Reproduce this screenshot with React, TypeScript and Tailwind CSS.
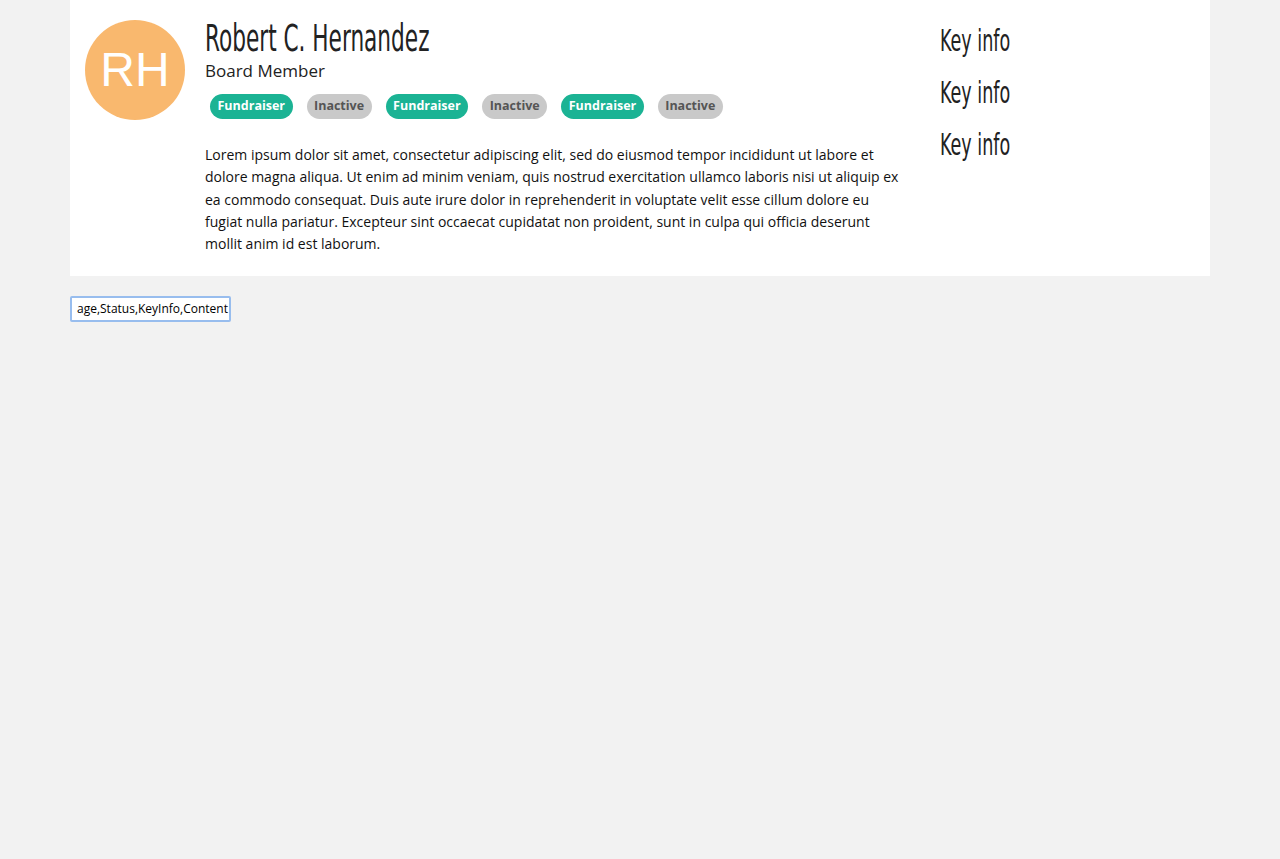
import React from 'react';

const tags: { label: string; active: boolean }[] = [
  { label: 'Fundraiser', active: true },
  { label: 'Inactive', active: false },
  { label: 'Fundraiser', active: true },
  { label: 'Inactive', active: false },
  { label: 'Fundraiser', active: true },
  { label: 'Inactive', active: false },
];

// no Oswald offline, so squeeze DejaVu Condensed
const condensed = "font-['DejaVu_Sans_Condensed','DejaVu_Sans',sans-serif]";

export default function App() {
  return (
    <div className="min-h-[859px] bg-[#f2f2f2] font-['Open_Sans',sans-serif] text-[#222]">
      <div className="mx-[70px] bg-white flex px-[15px] pt-[20px] pb-[21px]">
        <div className="w-[100px] h-[100px] rounded-full bg-[#f9b86e] flex items-center justify-center shrink-0">
          <span className="text-white text-[48px] font-['Liberation_Sans',sans-serif] leading-none">RH</span>
        </div>
        <div className="ml-[20px] w-[700px]">
          <h1 className={`${condensed} text-[37px] leading-[38px] text-[#222] whitespace-nowrap inline-block origin-left scale-x-[0.65] font-light`}>
            Robert C. Hernandez
          </h1>
          <div className="text-[17px] leading-[24px] mt-[1px]">Board Member</div>
          <div className="flex gap-[14px] ml-[5px] mt-[11px]">
            {tags.map((t, i) => (
              <span
                key={i}
                className={`h-[25px] px-[7.5px] rounded-full flex items-center text-[12.5px] font-bold ${
                  t.active ? 'bg-[#1bb394] text-white' : 'bg-[#c9c9c9] text-[#555]'
                }`}
              >
                {t.label}
              </span>
            ))}
          </div>
          <p className="text-[14px] leading-[22.25px] mt-[25px] text-[#111]">
            Lorem ipsum dolor sit amet, consectetur adipiscing elit, sed do eiusmod tempor incididunt ut labore et dolore magna aliqua. Ut enim ad minim veniam, quis nostrud exercitation ullamco laboris nisi ut aliquip ex ea commodo consequat. Duis aute irure dolor in reprehenderit in voluptate velit esse cillum dolore eu fugiat nulla pariatur. Excepteur sint occaecat cupidatat non proident, sunt in culpa qui officia deserunt mollit anim id est laborum.
          </p>
        </div>
        <div className={`ml-[35px] pt-[4px] flex flex-col gap-[19px] ${condensed} text-[31px] leading-[33px] text-[#222]`}>
          <div className="inline-block origin-left scale-x-[0.63] whitespace-nowrap">Key info</div>
          <div className="inline-block origin-left scale-x-[0.63] whitespace-nowrap">Key info</div>
          <div className="inline-block origin-left scale-x-[0.63] whitespace-nowrap">Key info</div>
        </div>
      </div>
      <div className="mx-[70px] mt-[20px]">
        <div className="w-[161px] h-[26px] border-2 border-[#98bdee] rounded-[2px] bg-white overflow-hidden flex items-center pl-[5px]">
          <span className="text-[12px] whitespace-nowrap text-black">age,Status,KeyInfo,Content</span>
        </div>
      </div>
    </div>
  );
}
